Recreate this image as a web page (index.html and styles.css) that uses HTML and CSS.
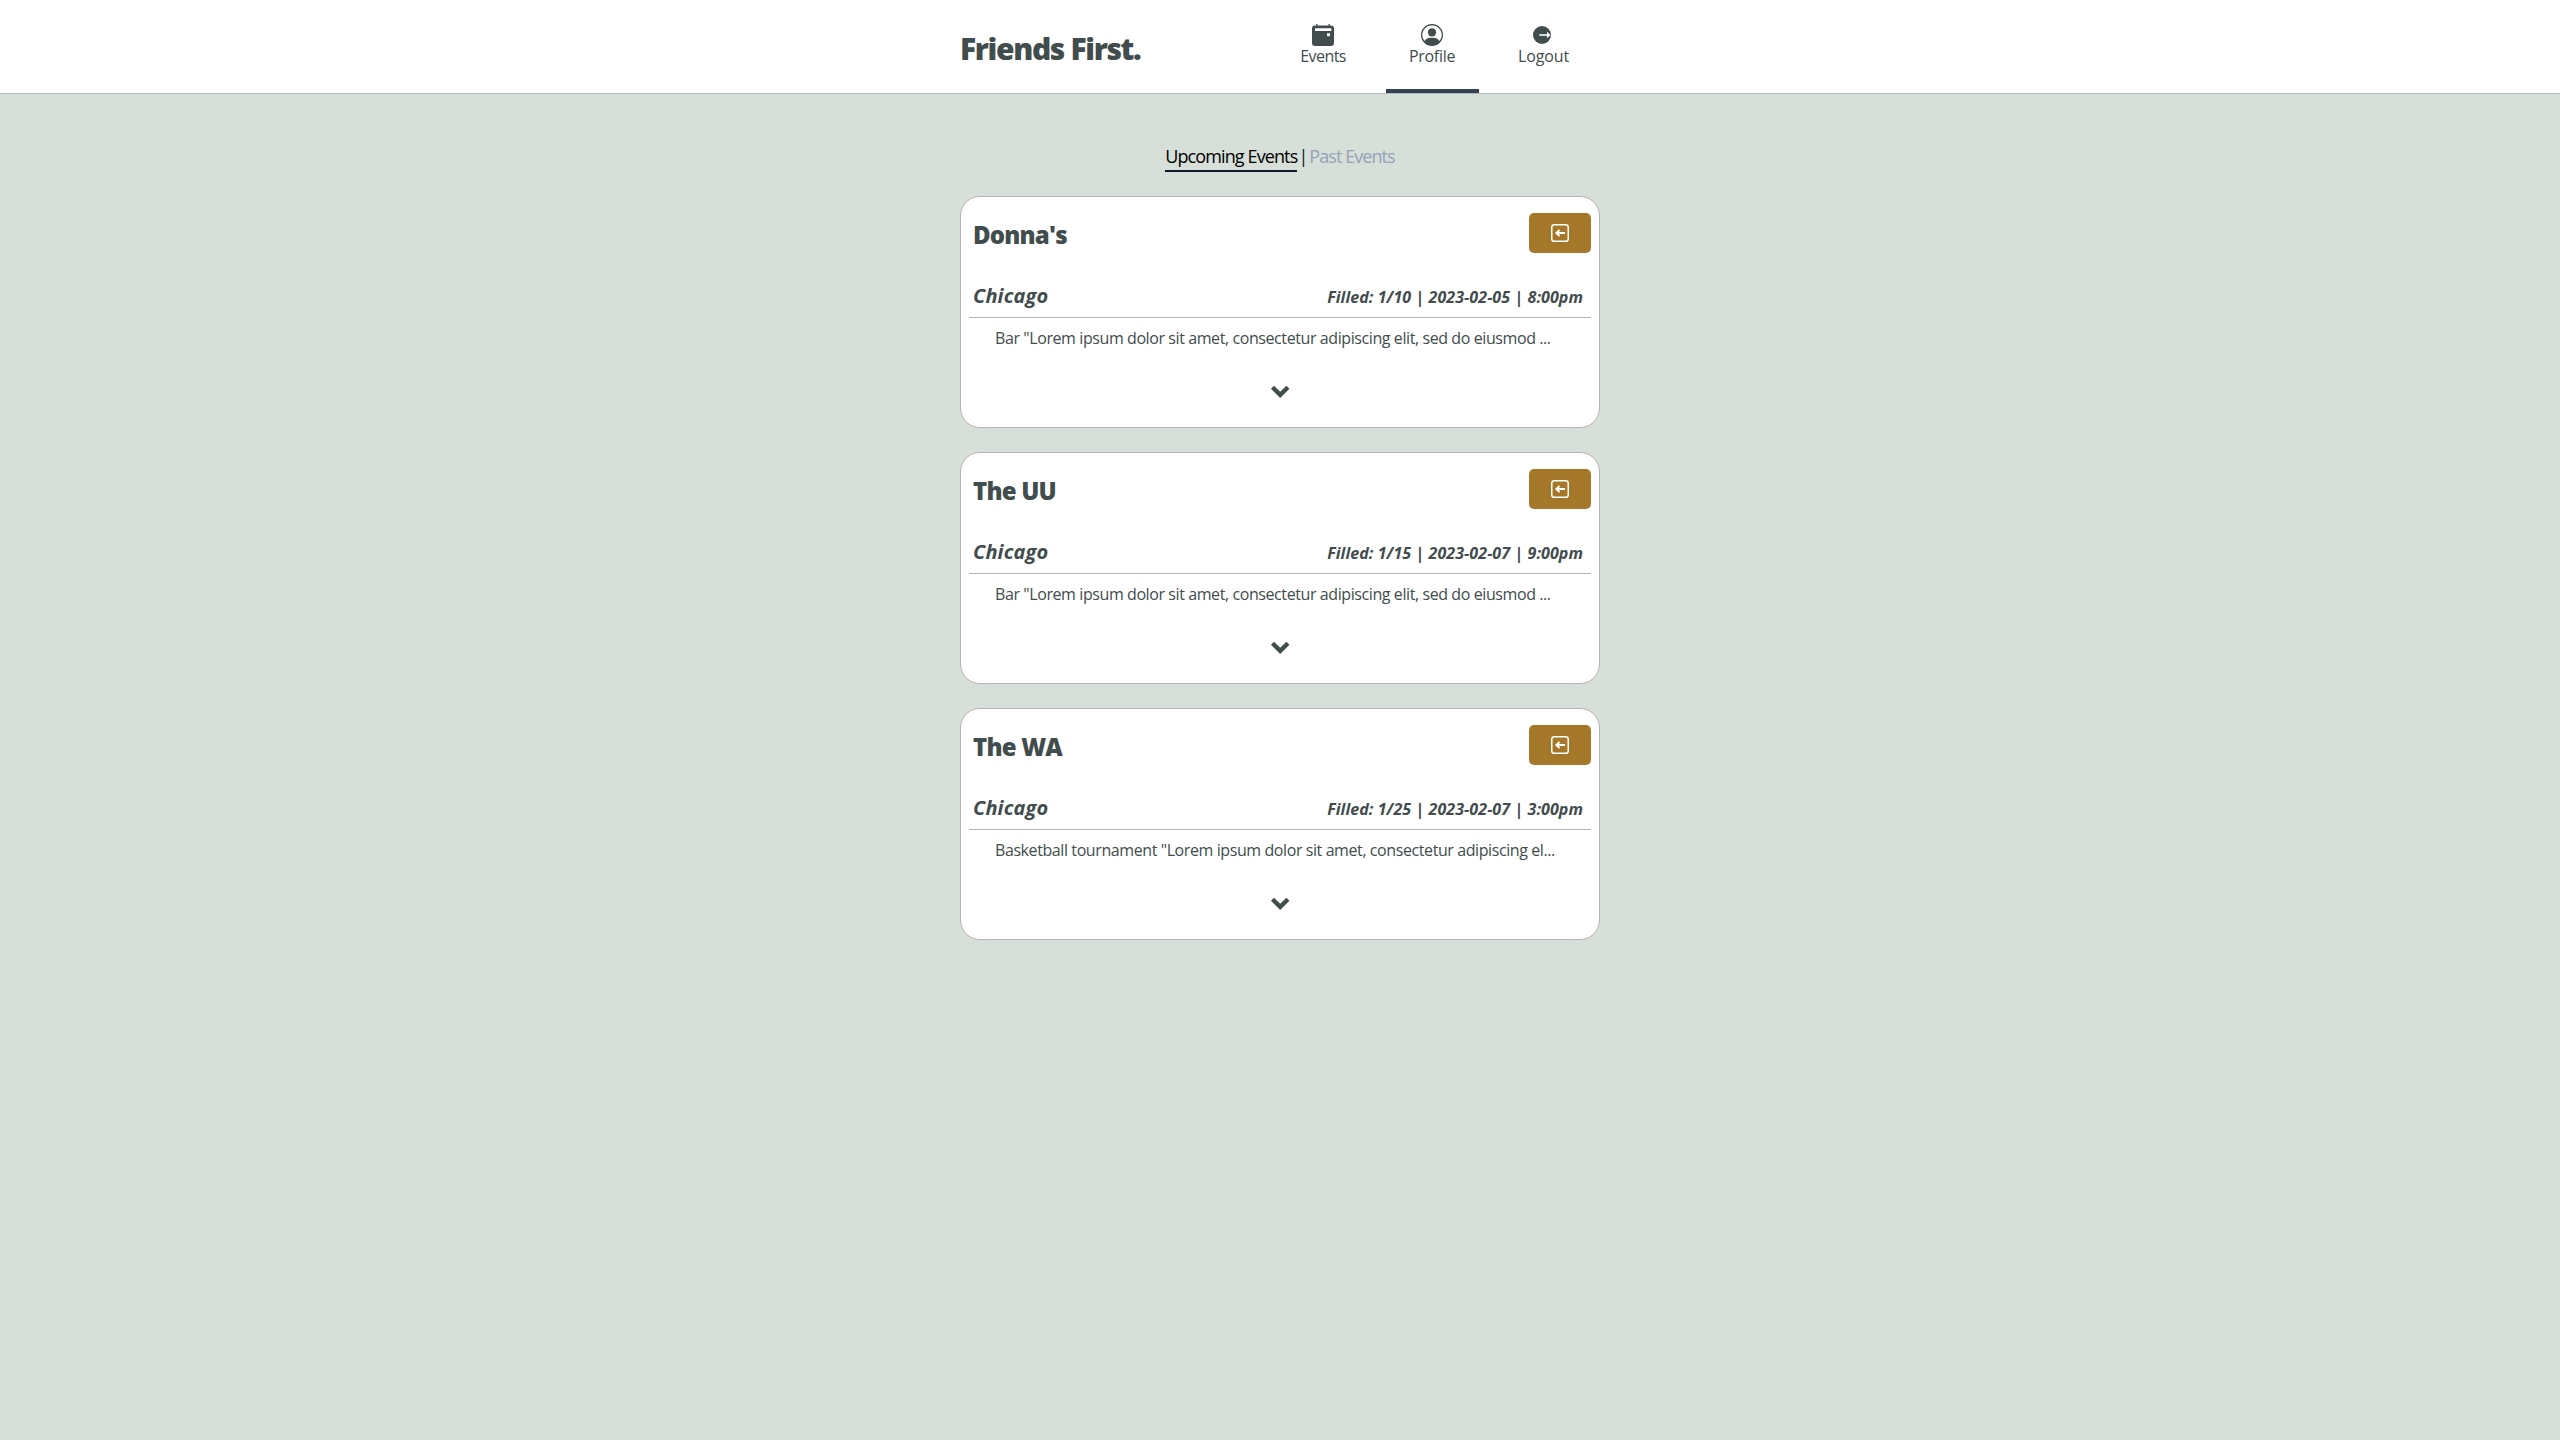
FILE: index.html
```html
<!DOCTYPE html>
<html lang="en">
<head>
<meta charset="utf-8">
<title>Friends First.</title>
<link rel="stylesheet" href="styles.css">
</head>
<body>
<svg class="defs" aria-hidden="true">
  <symbol id="leave" viewBox="0 0 18 18">
    <rect x=".75" y=".75" width="16.5" height="16.5" rx="2.6" fill="none" stroke="currentColor" stroke-width="1.5"/>
    <path d="M14 9H6M8.600 5.900 5.300 9l3.300 3.100" fill="none" stroke="currentColor" stroke-width="1.9"/>
  </symbol>
  <symbol id="chevron" viewBox="0 0 24 24">
    <path d="m4.500 7.200 7.700 7.700 7.700-7.700" fill="none" stroke="currentColor" stroke-width="4.4"/>
  </symbol>
</svg>
<header class="header">
  <div class="header-inner">
    <h1 class="brand">Friends First.</h1>
    <nav class="nav">
      <a class="nav-item nav-events">
        <svg class="nav-icon" viewBox="0 0 22 22"><path fill="currentColor" fill-rule="evenodd" d="M4.2 0h1.3v1.4h11V0h1.3v1.4H19a3 3 0 0 1 3 3V19a3 3 0 0 1-3 3H3a3 3 0 0 1-3-3V4.400a3 3 0 0 1 3-3h1.200zM3.600 4.200a.6.6 0 0 0-.6.6v1.600a.6.6 0 0 0 .6.6h15.200a.6.6 0 0 0 .6-.6V4.800a.6.6 0 0 0-.6-.6zM15.600 9.200a.6.6 0 0 0-.6.6v1.800a.6.6 0 0 0 .6.6h1.800a.6.6 0 0 0 .6-.6V9.800a.6.6 0 0 0-.6-.6z"/></svg>
        <span>Events</span>
      </a>
      <a class="nav-item nav-profile active">
        <svg class="nav-icon" viewBox="0 0 16 16" fill="currentColor"><path d="M11 6a3 3 0 1 1-6 0 3 3 0 0 1 6 0z"/><path fill-rule="evenodd" d="M0 8a8 8 0 1 1 16 0A8 8 0 0 1 0 8zm8-7a7 7 0 0 0-5.468 11.37C3.242 11.226 4.805 10 8 10s4.757 1.225 5.468 2.37A7 7 0 0 0 8 1z"/></svg>
        <span>Profile</span>
      </a>
      <a class="nav-item nav-logout">
        <svg class="nav-icon" viewBox="0 0 22 22"><circle cx="9" cy="11" r="9" fill="currentColor"/><path d="M6.300 11H15" stroke="#fff" stroke-width="1.600"/><path d="M14 7.800 17.600 11 14 14.200z" fill="#fff"/></svg>
        <span>Logout</span>
      </a>
    </nav>
  </div>
</header>
<main class="main">
  <div class="tabs">
    <a class="tab tab-active">Upcoming Events</a>
    <span class="separator">|</span>
    <a class="tab tab-past">Past Events</a>
  </div>
  <article class="card">
    <div class="card-top"><h2 class="name">Donna's</h2><button class="leave"><svg class="leave-icon"><use href="#leave"/></svg></button></div>
    <div class="meta"><span class="city">Chicago</span><span class="details">Filled: 1/10 | 2023-02-05 | 8:00pm</span></div>
    <p class="description">Bar "Lorem ipsum dolor sit amet, consectetur adipiscing elit, sed do eiusmod ...</p>
    <svg class="chevron"><use href="#chevron"/></svg>
  </article>
  <article class="card">
    <div class="card-top"><h2 class="name">The UU</h2><button class="leave"><svg class="leave-icon"><use href="#leave"/></svg></button></div>
    <div class="meta"><span class="city">Chicago</span><span class="details">Filled: 1/15 | 2023-02-07 | 9:00pm</span></div>
    <p class="description">Bar "Lorem ipsum dolor sit amet, consectetur adipiscing elit, sed do eiusmod ...</p>
    <svg class="chevron"><use href="#chevron"/></svg>
  </article>
  <article class="card">
    <div class="card-top"><h2 class="name">The WA</h2><button class="leave"><svg class="leave-icon"><use href="#leave"/></svg></button></div>
    <div class="meta"><span class="city">Chicago</span><span class="details">Filled: 1/25 | 2023-02-07 | 3:00pm</span></div>
    <p class="description">Basketball tournament "Lorem ipsum dolor sit amet, consectetur adipiscing el...</p>
    <svg class="chevron"><use href="#chevron"/></svg>
  </article>
</main>
</body>
</html>
```
FILE: styles.css
```css
* {
  box-sizing: border-box;
  margin: 0;
}

body {
  min-height: 100vh;
  background: #d6dfd8;
  color: #414c4c;
  font-family: "Open Sans", "Noto Sans", sans-serif;
  font-size: 16px;
}

svg {
  display: block;
}

.defs {
  display: none;
}

.header {
  height: 94px;
  background: #fff;
  border-bottom: 1px solid #b5b5b5;
}

.header-inner {
  display: flex;
  justify-content: space-between;
  width: 640px;
  height: 93px;
  margin: 0 auto;
}

.brand {
  padding-top: 3px;
  font-size: 30px;
  font-weight: 800;
  line-height: 91px;
  letter-spacing: -1.35px;
}

.nav {
  display: flex;
  gap: 16px;
  margin-right: 8px;
}

.nav-item {
  display: flex;
  flex-direction: column;
  align-items: center;
  padding: 24px 24px 0;
  border-bottom: 4px solid transparent;
  line-height: 21px;
}

.nav-item.active {
  border-bottom-color: #334155;
}

.nav-events {
  letter-spacing: -0.55px;
}

.nav-profile {
  padding-left: 23px;
  letter-spacing: -0.3px;
}

.nav-logout {
  padding-right: 23px;
  padding-left: 23px;
  letter-spacing: -0.15px;
}

.nav-icon {
  width: 22px;
  height: 22px;
  flex-shrink: 0;
}

.main {
  display: flex;
  flex-direction: column;
  gap: 24px;
  width: 640px;
  margin: 0 auto;
  padding-top: 50px;
}

.tabs {
  display: flex;
  justify-content: center;
  font-size: 18px;
  line-height: 24px;
}

.tab-active {
  padding-bottom: 2px;
  border-bottom: 2px solid #0f172a;
  color: #000;
  letter-spacing: -0.89px;
}

.separator {
  width: 12px;
  color: #0f172a;
  text-align: center;
}

.tab-past {
  color: #94a3b8;
  letter-spacing: -0.93px;
}

.card {
  height: 232px;
  padding: 16px 8px 0;
  background: #fff;
  border: 1px solid #b5b5b5;
  border-radius: 20px;
}

.card-top {
  display: flex;
  justify-content: space-between;
  height: 40px;
  padding-left: 4px;
}

.name {
  font-size: 24px;
  font-weight: 800;
  line-height: 44px;
  letter-spacing: -0.8px;
}

.leave {
  display: flex;
  align-items: center;
  justify-content: center;
  width: 62px;
  height: 40px;
  padding: 0;
  border: 0;
  border-radius: 5px;
  background: #a47828;
  color: #fff;
}

.leave-icon {
  width: 18px;
  height: 18px;
}

.meta {
  display: flex;
  justify-content: space-between;
  align-items: baseline;
  height: 37px;
  margin-top: 28px;
  padding: 1px 8px 0 4px;
  border-bottom: 1px solid #b5b5b5;
  font-style: italic;
  font-weight: 700;
  line-height: 28px;
}

.city {
  font-size: 20px;
  letter-spacing: 0.15px;
}

.details {
  letter-spacing: 0.08px;
}

.description {
  margin: 8px 0 30px 26px;
  line-height: 24px;
  letter-spacing: -0.41px;
  white-space: nowrap;
}

.chevron {
  width: 24px;
  height: 24px;
  margin: 0 auto;
}
```
